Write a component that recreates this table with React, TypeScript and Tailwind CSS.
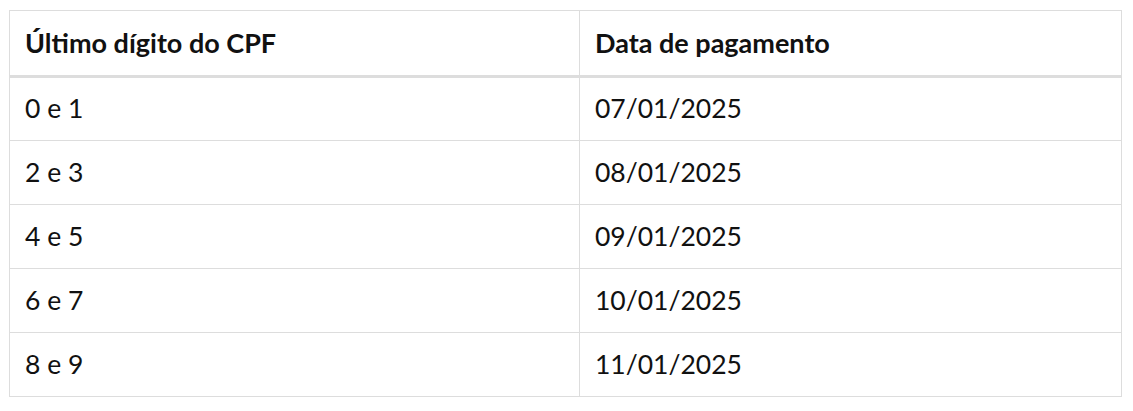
const rows = [
  ["0 e 1", "07/01/2025"],
  ["2 e 3", "08/01/2025"],
  ["4 e 5", "09/01/2025"],
  ["6 e 7", "10/01/2025"],
  ["8 e 9", "11/01/2025"],
];

export default function App() {
  return (
    <div className="bg-white px-[9px] pt-[10px] font-['Lato','Liberation_Sans',sans-serif] text-[#111]">
      <table className="w-[1113px] border-collapse border border-[#dddddd] text-left text-[26.5px]">
        <thead>
          <tr className="h-[66px] border-b-[3px] border-[#dddddd] text-[27px]">
            <th className="w-[570px] border-r border-[#dddddd] px-[15px] font-bold">Último dígito do CPF</th>
            <th className="px-[15px] font-bold">Data de pagamento</th>
          </tr>
        </thead>
        <tbody>
          {rows.map(([digito, data]) => (
            <tr key={digito} className="h-[64px] border-b border-[#dddddd]">
              <td className="border-r border-[#dddddd] px-[15px]">{digito}</td>
              <td className="px-[15px]">{data}</td>
            </tr>
          ))}
        </tbody>
      </table>
    </div>
  );
}
